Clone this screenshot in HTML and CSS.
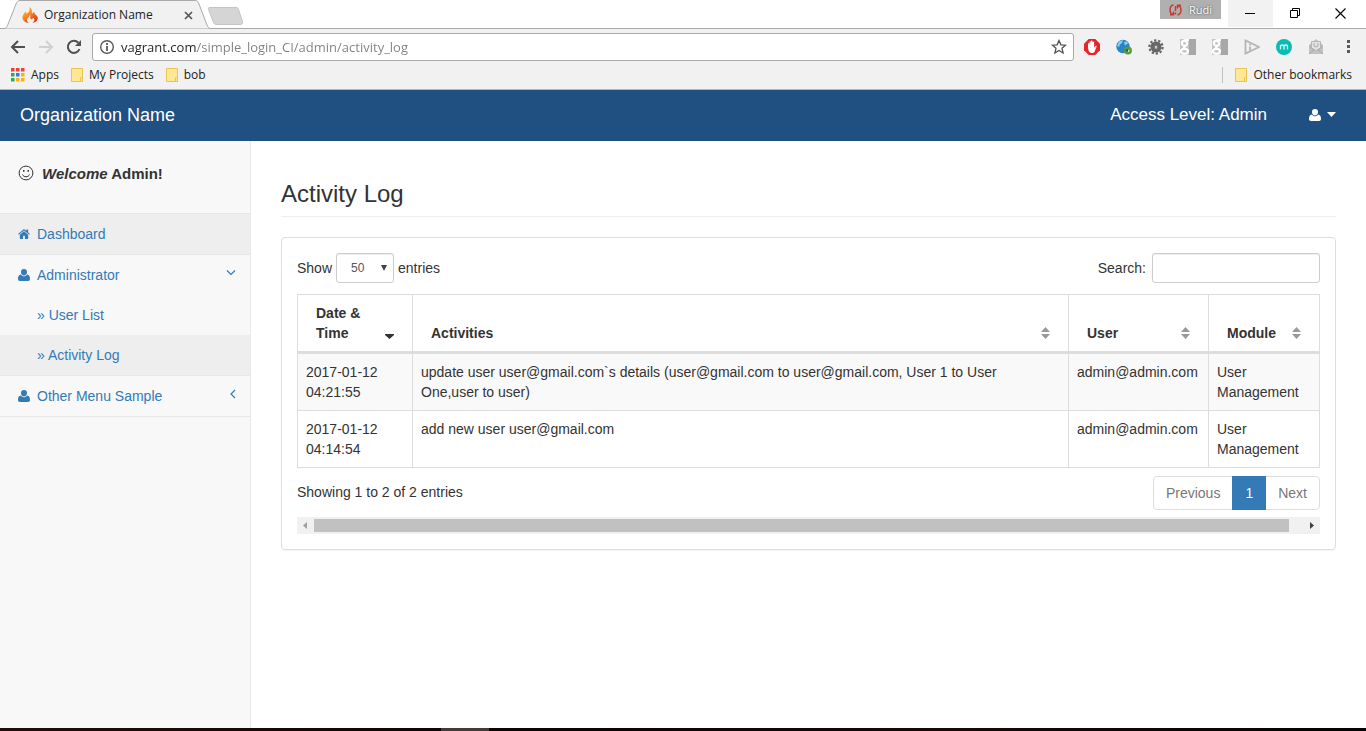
FILE: index.html
```html
<!DOCTYPE html>
<html lang="en">
<head>
<meta charset="utf-8">
<title>Organization Name</title>
<link rel="stylesheet" href="styles.css">
</head>
<body>
<svg class="defs" aria-hidden="true">
  <symbol id="user" viewBox="0 0 12 12"><path d="M6 0a3 3 0 0 1 3 3c0 2-1.300 3.500-3 3.500S3 5 3 3a3 3 0 0 1 3-3zM2.900 5.500C3.700 6.700 4.800 7.300 6 7.300s2.300-.6 3.100-1.800C11.200 5.600 12 7.500 12 10c0 1.300-.8 2-1.900 2H1.900C.8 12 0 11.300 0 10c0-2.500.8-4.400 2.900-4.500z"/></symbol>
  <symbol id="sort" viewBox="0 0 9 12"><path d="M4.500 0 9 5H0zM0 7h9l-4.500 5z"/></symbol>
  <symbol id="folder" viewBox="0 0 12 14"><path d="M.5.5h11v13H.5z" fill="#ffe794" stroke="#e8c553"/><path d="M9.500 13.500V10l1-1 1 1v3.500z" fill="#ffe794" stroke="#e8c553"/></symbol>
  <symbol id="gplus" viewBox="0 0 16 16"><path d="M0 0h16v16H0z" fill="#c4c4c4"/><path d="M9 0h7v16H9z" fill="#a8a8a8"/><circle cx="4.500" cy="4.200" r="2.600" fill="none" stroke="#fff" stroke-width="2.200"/><ellipse cx="4.500" cy="12.300" rx="3.500" ry="2.500" fill="none" stroke="#fff" stroke-width="2.200"/><path d="M4.500 1H9M5 7 4 8.500 7 11" fill="none" stroke="#fff" stroke-width="1.800"/></symbol>
</svg>

<div class="browser">
  <header class="tabstrip">
    <div class="tab">
      <svg class="tab-shape" viewBox="0 0 246 29" aria-hidden="true"><path d="M0 28.500h4c2 0 2.500-1 3.500-3L16 4c1-2.500 2-3.500 4-3.500h175c2 0 3 1 4 3.500l8 21c1 2.500 2 3.500 4 3.500h35V29H0z" fill="#f1f1f1" stroke="#a9a9a9"/><path d="M210 7.500h26c1.500 0 2 .5 2.500 2l4 12c.5 2-.5 3-2 3h-24c-2 0-2.500-1-3-2l-5-13c-.5-1.500 0-2 1.500-2z" fill="#d5d5d5" stroke="#c4c4c4"/></svg>
      <svg class="flame" viewBox="0 0 16 16" aria-hidden="true"><defs><linearGradient id="fire" x1="0" y1="0" x2=".7" y2="1"><stop offset="0" stop-color="#ffc43a"/><stop offset=".5" stop-color="#f98a25"/><stop offset="1" stop-color="#e2321a"/></linearGradient></defs><path d="M7 0c3.500 2 3 4 2.800 6 1 .8 1.600 0 1.600-1.500C13 6 12.500 7 14 8c3.500 3 1.500 7-3.500 8 3-3 2-4.500.5-5-.8 1.400-1.600 1.500-2.200 1C7.500 10.800 9 9.500 8 8c-.5 2-3 3-3 5 0 1.500 1 2.300 2 3-5 0-8.500-4.500-5.500-8.500C2.500 6 3.500 5.500 3.300 4.300 4.500 5 4.500 6 4.300 7 7 5.500 8.500 3 7 0z" fill="url(#fire)"/></svg>
      <span class="tab-title">Organization Name</span>
      <button class="plain tab-close" aria-label="Close tab"><svg viewBox="0 0 9 9" width="9" height="9"><path d="m1 1 7 7M8 1 1 8" stroke="#555" stroke-width="1.700"/></svg></button>
    </div>
    <div class="window-tools">
      <button class="plain profile"><svg width="13" height="12" viewBox="0 0 13 12" aria-hidden="true"><path d="M4.500.8C0 2 0 9.500 4 10.500M1 10.800h3.500V7.500M8.500 11c4.500-1 4.500-8.500.5-9.500M12 1.200H8.500v3.300M6.500 2v5M6.500 8.500v2" fill="none" stroke="#c93a32" stroke-width="1.500"/></svg><span>Rudi</span></button>
      <button class="plain win win-active" aria-label="Minimize"><svg width="11" height="11"><path d="M0 5.500h10" stroke="#000"/></svg></button>
      <button class="plain win" aria-label="Restore"><svg width="11" height="11"><path d="M.5 2.500h7v7h-7zM2.500 2V.5h7v7H8" fill="none" stroke="#000"/></svg></button>
      <button class="plain win" aria-label="Close"><svg width="11" height="11"><path d="m.5.5 10 10m0-10-10 10" stroke="#000" stroke-width="1.100"/></svg></button>
    </div>
  </header>

  <div class="toolbar">
    <button class="plain nav" aria-label="Back"><svg width="16" height="14" viewBox="0 0 16 14"><path d="M15 7H2M8 1 2 7l6 6" fill="none" stroke="#505050" stroke-width="2"/></svg></button>
    <button class="plain nav" aria-label="Forward"><svg width="16" height="14" viewBox="0 0 16 14"><path d="M1 7h13M8 1l6 6-6 6" fill="none" stroke="#d0d0d0" stroke-width="2"/></svg></button>
    <button class="plain nav" aria-label="Reload"><svg width="16" height="16" viewBox="0 0 16 16"><path d="M13.500 10A6 6 0 1 1 12.300 3.800" fill="none" stroke="#505050" stroke-width="2"/><path d="M15 1v6H9z" fill="#505050"/></svg></button>
    <div class="omnibox">
      <svg width="16" height="16" viewBox="0 0 16 16" aria-hidden="true"><circle cx="8" cy="8" r="6.300" fill="none" stroke="#5a5a5a" stroke-width="1.400"/><path d="M8 7v5M8 4v2" stroke="#5a5a5a" stroke-width="1.800"/></svg>
      <input class="url" aria-label="Address" value="vagrant.com/simple_login_CI/admin/activity_log">
      <button class="plain" aria-label="Bookmark this page"><svg width="16" height="16" viewBox="0 0 16 16"><path d="m8 1.500 1.900 4.300 4.600.4-3.500 3.100 1.100 4.700L8 11.500 3.900 14 5 9.300 1.500 6.200l4.600-.4z" fill="none" stroke="#505050" stroke-width="1.300"/></svg></button>
    </div>
    <div class="extensions">
      <button class="plain" aria-label="Ad blocker"><svg viewBox="0 0 16 16"><path d="M4.700 0h6.600L16 4.700v6.600L11.300 16H4.700L0 11.300V4.700z" fill="#e8252b"/><path d="M4 8V4.500q.8-1 1.500 0V7 2.800q.8-1 1.500 0V7 2q.8-1 1.500 0v5-4q.9-1 1.600 0v5.500l1.300-1.700q1.200-.3 1.200.6L10.500 13q-.8 1-2 1H7q-3-1-3-6z" fill="#fff"/></svg></button>
      <button class="plain" aria-label="Web tools"><svg viewBox="0 0 16 16"><circle cx="7" cy="7.500" r="6.700" fill="#2586c9"/><path d="M3 2.500 7 1 6 4 4 5.500 3 8 1 7zM8 3l3-.5 1 2-3 2z" fill="#91cce9"/><circle cx="12" cy="11.500" r="2.700" fill="none" stroke="#5c9a34" stroke-width="2.500"/><path d="m9 11 3-1v3z" fill="#365f22"/></svg></button>
      <button class="plain" aria-label="Settings helper"><svg viewBox="0 0 16 16"><circle cx="8" cy="8" r="4" fill="#777" stroke="#666" stroke-width="3"/><circle cx="8" cy="8" r="6.600" fill="none" stroke="#666" stroke-width="2.200" stroke-dasharray="2.300 1.840"/><path d="M7 7h2v2.500H7z" fill="#ccc"/></svg></button>
      <button class="plain" aria-label="Google extension"><svg><use href="#gplus"/></svg></button>
      <button class="plain" aria-label="Google extension two"><svg><use href="#gplus"/></svg></button>
      <button class="plain" aria-label="Play"><svg viewBox="0 0 16 16"><path d="M1.500 1.500v13L15 8zM6 7.500v4M6 5v1.500" fill="none" stroke="#b5b5b5" stroke-width="1.800"/></svg></button>
      <button class="plain" aria-label="Messenger"><svg viewBox="0 0 16 16"><circle cx="8" cy="8" r="8" fill="#08bcb5"/><path d="M4.500 10.500V6m0 1.500C5 5.500 8 5.500 8 7.500v3m0-3c.5-2 3.500-2 3.500 0v3" fill="none" stroke="#d8fffb" stroke-width="1.300"/></svg></button>
      <button class="plain" aria-label="Mail"><svg viewBox="0 0 16 16"><path d="M1 6 8 0l7 6v9H1z" fill="#c2c2c2"/><path d="M3.500 2.500h9V9L8 11.500 3.500 9z" fill="#e4e4e4" stroke="#b5b5b5"/><path d="M6 4v3q2 2 4 0V4M1 7l5 4-5 4m14-8-5 4 5 4" fill="none" stroke="#aaa"/></svg></button>
      <button class="plain" aria-label="Menu"><svg viewBox="0 0 16 16"><path d="M7 1h3v3H7zm0 5h3v3H7zm0 5h3v3H7z" fill="#5a5a5a"/></svg></button>
    </div>
  </div>

  <nav class="bookmarks" aria-label="Bookmarks">
    <a href="#"><svg width="14" height="14" viewBox="0 0 14 14" aria-hidden="true"><path d="M0 0h3.500v3.500H0zm5 0h3.500v3.500H5zm5 0h3.500v3.500H10z" fill="#ea4335"/><path d="M0 5h3.500v3.500H0zM0 10h3.500v3.500H0z" fill="#34a853"/><path d="M5 5h3.500v3.500H5z" fill="#2b7de9"/><path d="M10 5h3.500v3.500H10zM5 10h3.500v3.500H5zm5 0h3.500v3.500H10z" fill="#fbb30b"/></svg>Apps</a>
    <a href="#"><svg width="12" height="14" aria-hidden="true"><use href="#folder"/></svg>My Projects</a>
    <a href="#"><svg width="12" height="14" aria-hidden="true"><use href="#folder"/></svg>bob</a>
    <a href="#" class="other"><svg width="12" height="14" aria-hidden="true"><use href="#folder"/></svg>Other bookmarks</a>
  </nav>

  <div class="app">
    <header class="navbar">
      <a href="#" class="brand">Organization Name</a>
      <span class="access">Access Level: Admin</span>
      <button class="plain account" aria-label="Account menu"><svg width="12" height="12"><use href="#user"/></svg><svg width="9" height="5"><path d="M0 0h9L4.500 5z"/></svg></button>
    </header>
    <div class="body">
      <aside class="sidebar">
        <p class="welcome"><svg width="16" height="16" viewBox="0 0 16 16" aria-hidden="true"><circle cx="8" cy="8" r="6.900" fill="none" stroke="#333"/><path d="M4.500 9.500c1 3 6 3 7 0" fill="none" stroke="#333"/><path d="M5 5h1.500v1.800H5zm4.500 0H11v1.800H9.500z" fill="#333"/></svg><span><em>Welcome</em> Admin!</span></p>
        <ul class="menu">
          <li><a href="#" class="current"><svg class="glyph" viewBox="0 0 13 11" aria-hidden="true"><path d="M6.500 2.500 11 6.300V10q0 1-1 1H7.500V7.500h-2V11H3q-1 0-1-1V6.300zM6.500 0 9 2.100V.5h2v3.300l2 1.700-.8.900L6.500 1.600.8 6.400 0 5.500 5.800.5z"/></svg>Dashboard</a></li>
          <li><a href="#"><svg class="glyph" aria-hidden="true"><use href="#user"/></svg>Administrator<svg class="arrow" viewBox="0 0 10 10" aria-hidden="true"><path d="m1 2.500 4 4 4-4"/></svg></a>
            <ul class="submenu">
              <li><a href="#">» User List</a></li>
              <li><a href="#" class="current">» Activity Log</a></li>
            </ul>
          </li>
          <li><a href="#"><svg class="glyph" aria-hidden="true"><use href="#user"/></svg>Other Menu Sample<svg class="arrow" viewBox="0 0 10 10" aria-hidden="true"><path d="M9 1 5 5l4 4"/></svg></a></li>
        </ul>
      </aside>
      <main class="page">
        <h1>Activity Log</h1>
        <section class="panel">
          <div class="controls">
            <label class="length">Show <select><option>10</option><option>25</option><option selected>50</option><option>100</option></select> entries</label>
            <label class="search">Search: <input type="search"></label>
          </div>
          <table>
            <colgroup><col class="c-date"><col><col class="c-user"><col class="c-module"></colgroup>
            <thead>
              <tr>
                <th scope="col"><button class="plain">Date &amp; Time<svg class="sorted" viewBox="0 0 9 12" aria-hidden="true"><path d="M0 7h9v1l-4.500 4L0 8z"/></svg></button></th>
                <th scope="col"><button class="plain">Activities<svg aria-hidden="true"><use href="#sort"/></svg></button></th>
                <th scope="col"><button class="plain">User<svg aria-hidden="true"><use href="#sort"/></svg></button></th>
                <th scope="col"><button class="plain">Module<svg aria-hidden="true"><use href="#sort"/></svg></button></th>
              </tr>
            </thead>
            <tbody>
              <tr><td>2017-01-12 04:21:55</td><td class="detail">update user user@gmail.com`s details (user@gmail.com to user@gmail.com, User 1 to User One,user to user)</td><td>admin@admin.com</td><td>User Management</td></tr>
              <tr><td>2017-01-12 04:14:54</td><td class="detail">add new user user@gmail.com</td><td>admin@admin.com</td><td>User Management</td></tr>
            </tbody>
          </table>
          <div class="footer">
            <span>Showing 1 to 2 of 2 entries</span>
            <nav class="pager" aria-label="Pages"><a href="#">Previous</a><a href="#" class="on">1</a><a href="#">Next</a></nav>
          </div>
          <div class="scrollbar" aria-hidden="true">
            <svg width="17" height="17"><path d="M10 5v7L6 8.500z" fill="#a0a0a0"/></svg>
            <div class="track"><div class="thumb"></div></div>
            <svg width="17" height="17"><path d="M7 5v7l4-3.500z" fill="#404040"/></svg>
          </div>
        </section>
      </main>
    </div>
  </div>
  <div class="taskbar"><div class="taskbar-item"></div></div>
</div>
</body>
</html>
```
FILE: styles.css
```css
* { box-sizing: border-box; }
body { margin: 0; color: #333; font: 14px/20px "Liberation Sans", Arial, sans-serif; background: #fff; }
a { color: #337ab7; text-decoration: none; }
ul { margin: 0; padding: 0; list-style: none; }
svg { flex: none; display: block; }
.defs { position: absolute; width: 0; height: 0; }
.plain { display: flex; align-items: center; justify-content: center; margin: 0; padding: 0; border: 0; background: none; color: inherit; font: inherit; }
.browser { display: flex; flex-direction: column; min-height: 100vh; }

.tabstrip { display: flex; justify-content: space-between; height: 29px; border-bottom: 1px solid #a9a9a9; font: 12px/16px "Open Sans", "Noto Sans", sans-serif; color: #222; }
.tab { position: relative; display: flex; align-items: center; width: 246px; height: 29px; padding: 1px 0 0 22px; }
.tab-shape { position: absolute; left: 0; top: 0; width: 246px; height: 29px; }
.flame { position: relative; width: 16px; height: 16px; margin-right: 6px; }
.tab-title { position: relative; width: 140px; white-space: nowrap; }
.tab-close { position: relative; }
.window-tools { display: flex; align-items: flex-start; padding-right: 3px; }
.profile { width: 61px; height: 19px; margin-right: 7px; gap: 7px; background: #b0b0b0; color: #fff; font-size: 11px; text-shadow: 0 0 2px #333; }
.win { width: 45px; height: 27px; }
.win-active { background: #f2f2f2; }

.toolbar { display: flex; align-items: center; height: 36px; padding: 0 10px 0 4px; background: #f1f1f1; }
.nav { width: 28px; height: 28px; }
.omnibox { display: flex; flex: 1; align-items: center; height: 28px; margin-left: 4px; padding: 0 6px; border: 1px solid #a9a9a9; border-radius: 3px; background: #fff; }
.url { flex: 1; min-width: 0; margin-left: 6px; padding: 0; border: 0; outline: 0; font: 13px/20px "Open Sans", "Noto Sans", sans-serif; color: #808080; background: linear-gradient(90deg, #222 76px, #808080 76px); background-clip: text; -webkit-background-clip: text; -webkit-text-fill-color: transparent; }
.extensions { display: flex; gap: 16px; margin-left: 10px; }
.extensions svg { width: 16px; height: 16px; }

.bookmarks { display: flex; align-items: center; gap: 12px; height: 25px; padding: 0 14px 4px 11px; border-bottom: 1px solid #b5b5b5; background: #f1f1f1; font: 12px/16px "Open Sans", "Noto Sans", sans-serif; }
.bookmarks a { display: flex; align-items: center; gap: 6px; color: #222; }
.bookmarks .other { margin-left: auto; padding-left: 12px; border-left: 1px solid #c0c0c0; }

.app { display: flex; flex: 1; flex-direction: column; }
.navbar { display: flex; align-items: center; height: 51px; padding: 0 30px 2px 20px; background: #205081; color: #fff; font-size: 18px; }
.brand { flex: 1; color: #fff; }
.access { margin-right: 42px; font-size: 17px; }
.account { gap: 6px; }
.account svg, .glyph { fill: currentColor; }
.body { display: flex; flex: 1; }
.sidebar { width: 251px; border-right: 1px solid #e7e7e7; background: #f8f8f8; }
.welcome { display: flex; gap: 8px; margin: 0; padding: 23px 18px 29px; font-weight: bold; font-size: 15px; }
.welcome svg { margin-top: 1px; }
.menu { border-top: 1px solid #e7e7e7; }
.menu > li { border-bottom: 1px solid #e7e7e7; }
.menu a { display: flex; align-items: center; height: 40px; padding: 0 14px 0 18px; }
.menu .current { background: #eee; }
.menu .submenu a { padding-left: 37px; }
.glyph { width: 12px; height: 12px; margin-right: 7px; }
.arrow { width: 10px; height: 10px; margin: 0 0 4px auto; fill: none; stroke: currentColor; stroke-width: 1.2; }

.page { flex: 1; min-width: 0; padding: 40px 30px 0; }
h1 { margin: 0 0 20px; padding-bottom: 9px; border-bottom: 1px solid #eee; font-size: 24px; line-height: 26px; font-weight: normal; }
.panel { padding: 15px; border: 1px solid #ddd; border-radius: 4px; box-shadow: 0 1px 1px rgba(0, 0, 0, .05); }
.controls, .footer { display: flex; justify-content: space-between; }
.controls { margin-bottom: 11px; }
.controls label { display: flex; align-items: center; gap: 4px; }
.controls .search { gap: 6px; }
select, .search input { height: 30px; border: 1px solid #ccc; border-radius: 3px; box-shadow: inset 0 1px 1px rgba(0, 0, 0, .075); background: #fff; font: 12px/18px "Liberation Sans", Arial, sans-serif; color: #555; }
select { width: 58px; padding: 0 14px; appearance: none; }
.search input { width: 168px; padding: 5px 10px; }
.length { position: relative; }
.length::after { content: ""; position: absolute; left: 84px; top: 12px; border: solid transparent; border-width: 6px 3px 0; border-top-color: #444; }

table { width: 100%; table-layout: fixed; border: solid #ddd; border-width: 1px 0 0 1px; border-spacing: 0; }
.c-date { width: 115px; }
.c-user { width: 140px; }
.c-module { width: 111px; }
th, td { padding: 8px; border: solid #ddd; border-width: 0 1px 1px 0; text-align: left; vertical-align: top; }
.detail { padding-right: 40px; }
th { padding: 8px 18px; border-bottom-width: 3px; vertical-align: bottom; }
th .plain { width: 100%; align-items: flex-end; justify-content: space-between; text-align: left; }
th svg { width: 9px; height: 12px; margin-bottom: 4px; fill: #999; }
th .sorted { fill: #333; }
tbody tr:nth-child(odd) { background: #f9f9f9; }
.footer { padding-top: 8px; }
.footer > span { padding-top: 6px; }
.pager { display: flex; border: 1px solid #ddd; border-radius: 4px; }
.pager a { padding: 6px 12px; color: #777; }
.pager .on { margin: -1px 0; padding: 7px 13px; background: #337ab7; color: #fff; }
.scrollbar { display: flex; margin-top: 7px; background: #f1f1f1; }
.track { flex: 1; padding: 2px 0; }
.thumb { width: 98.6%; height: 13px; background: #c1c1c1; }

.taskbar { height: 3px; padding-left: 441px; background: linear-gradient(90deg, #220c08, #0c0404 40%, #180808 70%, #050303); }
.taskbar-item { width: 48px; height: 3px; background: #463a38; }
```
